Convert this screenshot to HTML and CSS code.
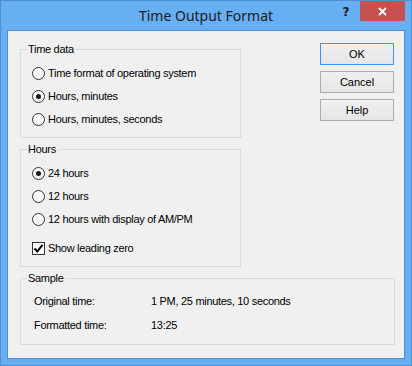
FILE: index.html
```html
<!DOCTYPE html>
<html lang="en">
<head>
  <meta charset="UTF-8" />
  <title>Time Output Format</title>
  <link rel="stylesheet" href="styles.css">
</head>
<body>

<div class="window">
  <div class="titlebar">
    <span></span>
    <div class="title">Time Output Format</div>
    <div class="controls">
      <span class="help">?</span>
      <span class="close">
        <svg width="9" height="9" viewBox="0 0 9 9"><path d="M1 1l7 7M8 1l-7 7" stroke="#fff" stroke-width="1.8"/></svg>
      </span>
    </div>
  </div>

  <div class="client">
    <div class="top">
      <div class="groups">
        <!-- Time data -->
        <fieldset class="group">
          <legend>Time data</legend>
          <div class="rows">
            <div class="opt"><span class="radio"></span>Time format of operating system</div>
            <div class="opt"><span class="radio on"></span>Hours, minutes</div>
            <div class="opt"><span class="radio"></span>Hours, minutes, seconds</div>
          </div>
        </fieldset>

        <!-- Hours -->
        <fieldset class="group">
          <legend>Hours</legend>
          <div class="rows">
            <div class="opt"><span class="radio on"></span>24 hours</div>
            <div class="opt"><span class="radio"></span>12 hours</div>
            <div class="opt"><span class="radio"></span>12 hours with display of AM/PM</div>
            <div class="opt check-row">
              <span class="checkbox">
                <svg width="11" height="11" viewBox="0 0 11 11"><path d="M1.5 5.5l2.8 3L9.5 1.8" fill="none" stroke="#000" stroke-width="2"/></svg>
              </span>Show leading zero
            </div>
          </div>
        </fieldset>
      </div>

      <div class="buttons">
        <button class="btn default">OK</button>
        <button class="btn">Cancel</button>
        <button class="btn">Help</button>
      </div>
    </div>

    <!-- Sample -->
    <fieldset class="group sample">
      <legend>Sample</legend>
      <div class="sample-rows">
        <div class="sample-row"><span class="key">Original time:</span><span>1 PM, 25 minutes, 10 seconds</span></div>
        <div class="sample-row"><span class="key">Formatted time:</span><span>13:25</span></div>
      </div>
    </fieldset>
  </div>
</div>

</body>
</html>
```

FILE: styles.css
```css
html, body {
  margin: 0;
  padding: 0;
  background: #fff;
}

.window {
  width: 412px;
  height: 366px;
  box-sizing: border-box;
  background: #66aff3;
  border: 1px solid #4f8fd2;
  font-family: "Liberation Sans", Arial, sans-serif;
  font-size: 11px;
  letter-spacing: -0.3px;
  color: #000;
}

/* Заголовок окна */
.titlebar {
  height: 29px;
  display: grid;
  grid-template-columns: 1fr auto 1fr;
}

.title {
  font-family: "Noto Sans", "Open Sans", sans-serif;
  font-size: 14px;
  letter-spacing: 0;
  line-height: 29px;
  color: #1b1b1b;
}

.controls {
  justify-self: end;
  display: flex;
  align-items: flex-start;
  padding-right: 6px;
}

.help {
  width: 26px;
  margin-right: 1px;
  text-align: center;
  font-family: "DejaVu Sans", sans-serif;
  font-weight: bold;
  font-size: 12px;
  line-height: 22px;
  color: #1a1a1a;
  letter-spacing: 0;
}

.close {
  width: 45px;
  height: 20px;
  background: #c75050;
  display: flex;
  align-items: center;
  justify-content: center;
}

/* Клиентская область */
.client {
  margin: 0 6px 6px;
  height: 329px;
  box-sizing: border-box;
  border: 1px solid #4f8fd2;
  background: #f0f0f0;
  padding: 12px 9px 0 12px;
}

.top {
  display: flex;
  align-items: flex-start;
}

.groups {
  width: 221px;
  display: flex;
  flex-direction: column;
  gap: 5px;
}

.group {
  margin: 0;
  padding: 0 0 9px 6px;
  border: 1px solid #dcdcdc;
  min-width: 0;
}

.group legend {
  padding: 0 1px;
  line-height: 13px;
}

.rows {
  padding: 9px 0 0 5px;
  display: flex;
  flex-direction: column;
  gap: 6px;
}

.opt {
  height: 17px;
  line-height: 17px;
  display: flex;
  align-items: center;
  gap: 3px;
  white-space: nowrap;
}

.check-row {
  margin-top: 6px;
}

.radio {
  width: 13px;
  height: 13px;
  box-sizing: border-box;
  border: 1px solid #333;
  border-radius: 50%;
  background: linear-gradient(#fff, #f4f4f4);
  display: flex;
  align-items: center;
  justify-content: center;
}

.radio.on::after {
  content: "";
  width: 5px;
  height: 5px;
  border-radius: 50%;
  background: #1a1a1a;
}

.checkbox {
  width: 13px;
  height: 13px;
  box-sizing: border-box;
  border: 1px solid #333;
  background: #fff;
  display: flex;
  align-items: center;
  justify-content: center;
}

/* Кнопки */
.buttons {
  margin-left: auto;
  margin-right: 1px;
  width: 74px;
  display: flex;
  flex-direction: column;
  gap: 6px;
}

.btn {
  height: 22px;
  padding: 0;
  font: inherit;
  letter-spacing: 0;
  color: #000;
  background: linear-gradient(#f0f0f0, #e5e5e5);
  border: 1px solid #acacac;
}

.btn.default {
  border-color: #3399ff;
}

/* Пример */
.sample {
  margin-top: 5px;
  padding-bottom: 10px;
}

.sample-rows {
  padding: 8px 0 0 7px;
  display: flex;
  flex-direction: column;
  gap: 7px;
}

.sample-row {
  height: 17px;
  line-height: 17px;
  display: flex;
}

.key {
  width: 117px;
}
```
